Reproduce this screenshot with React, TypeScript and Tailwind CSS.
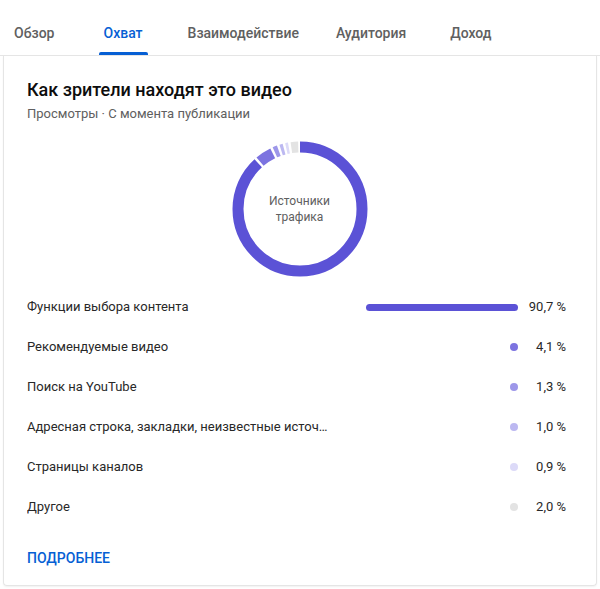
import React from "react";

const TABS = [
  { label: "Обзор", ml: "ml-0" },
  { label: "Охват", ml: "ml-[49px]", active: true },
  { label: "Взаимодействие", ml: "ml-[45px]" },
  { label: "Аудитория", ml: "ml-[37px]" },
  { label: "Доход", ml: "ml-[44px]" },
];

const SOURCES = [
  { label: "Функции выбора контента", value: 90.7, arc: 88.7, text: "90,7 %", color: "#5b52d6", dot: "bg-[#5b52d6]" },
  { label: "Рекомендуемые видео", value: 4.1, arc: 4.5, text: "4,1 %", color: "#7c73e0", dot: "bg-[#7c73e0]" },
  { label: "Поиск на YouTube", value: 1.3, arc: 1.7, text: "1,3 %", color: "#9d97e9", dot: "bg-[#9d97e9]" },
  { label: "Адресная строка, закладки, неизвестные источники", value: 1.0, arc: 1.4, text: "1,0 %", color: "#bcb8f1", dot: "bg-[#bcb8f1]" },
  { label: "Страницы каналов", value: 0.9, arc: 1.3, text: "0,9 %", color: "#dcdaf8", dot: "bg-[#dcdaf8]" },
  { label: "Другое", value: 2.0, arc: 2.4, text: "2,0 %", color: "#e3e3e3", dot: "bg-[#e3e3e3]" },
];

function Donut() {
  const r = 62;
  const c = 2 * Math.PI * r;
  const gap = 2.4;
  let offset = 0;
  return (
    <svg width="136" height="136" viewBox="0 0 136 136">
      <g transform="rotate(-90 68 68)">
        {SOURCES.map((s) => {
          const len = (s.arc / 100) * c;
          const start = offset;
          offset += len;
          return (
            <circle
              key={s.label}
              cx="68"
              cy="68"
              r={r}
              fill="none"
              stroke={s.color}
              strokeWidth="11"
              strokeDasharray={`${Math.max(len - gap, 0.8)} ${c}`}
              strokeDashoffset={-start}
            />
          );
        })}
      </g>
    </svg>
  );
}

export default function App() {
  return (
    <div className="w-[600px] h-[589px] bg-white font-['Roboto',sans-serif] overflow-hidden">
      {/* Tabs */}
      <div className="flex h-[56px] pl-[14px] border-b border-[#e5e5e5]">
        {TABS.map((t) => (
          <div key={t.label} className={`flex flex-col items-center justify-end ${t.ml}`}>
            <span
              className={`text-[14px] leading-[20px] font-medium ${
                t.active ? "text-[#065fd4]" : "text-[#606060]"
              }`}
            >
              {t.label}
            </span>
            <div
              className={`mt-[9px] h-[3px] w-[calc(100%+10px)] rounded-t-[2px] ${
                t.active ? "bg-[#065fd4]" : "bg-transparent"
              }`}
            />
          </div>
        ))}
      </div>

      {/* Card */}
      <div className="mx-[3px] h-[530px] border border-t-0 border-[#e5e5e5] rounded-b-[4px] shadow-[0_1px_2px_rgba(0,0,0,0.06)] pl-[23px] pr-[30px] pt-[22px]">
        <div className="text-[18px] leading-[24px] font-medium text-[#0d0d0d]">
          Как зрители находят это видео
        </div>
        <div className="mt-[3px] text-[13px] leading-[18px] text-[#606060]">
          Просмотры · С момента публикации
        </div>

        <div className="mt-[18px] flex justify-center pl-[6px]">
          <div className="relative w-[136px] h-[136px]">
            <Donut />
            <div className="absolute inset-0 flex items-center justify-center text-center text-[12px] leading-[16px] text-[#606060]">
              Источники
              <br />
              трафика
            </div>
          </div>
        </div>

        <div className="mt-[10px] flex flex-col">
          {SOURCES.map((s, i) => (
            <div key={s.label} className="flex items-center h-[40px]">
              <div className="w-[305px] truncate text-[13px] text-[#282828]">{s.label}</div>
              <div className="flex-1 flex justify-end">
                {i === 0 ? (
                  <div className="w-[168px] flex justify-end">
                    <div
                      className="h-[7px] rounded-full bg-[#5b52d6]"
                      style={{ width: `${s.value}%` }}
                    />
                  </div>
                ) : (
                  <div className={`w-[8px] h-[8px] rounded-full ${s.dot}`} />
                )}
              </div>
              <div className="w-[48px] text-right text-[13px] text-[#282828]">{s.text}</div>
            </div>
          ))}
        </div>

        <div className="mt-[21px] text-[14px] leading-[20px] font-medium text-[#065fd4] uppercase">
          Подробнее
        </div>
      </div>
    </div>
  );
}
